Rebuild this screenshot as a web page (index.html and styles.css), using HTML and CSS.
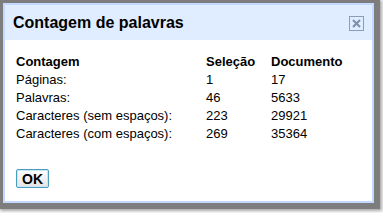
FILE: index.html
```html
<!DOCTYPE html>
<html>
<head>
<meta charset="utf-8">
<link rel="stylesheet" href="styles.css">
</head>
<body>
<div class="frame">
  <div class="dialog">
    <div class="titlebar">
      <span class="title">Contagem de palavras</span>
      <span class="close"><svg width="15" height="15" viewBox="0 0 15 15"><rect x="0.5" y="0.5" width="14" height="14" fill="none" stroke="#8b9bb8"/><path d="M4 4 L11 11 M11 4 L4 11" stroke="#7e8ea8" stroke-width="2"/></svg></span>
    </div>
    <div class="content">
      <table class="counts">
        <tr class="head"><td>Contagem</td><td>Seleção</td><td>Documento</td></tr>
        <tr><td>Páginas:</td><td>1</td><td>17</td></tr>
        <tr><td>Palavras:</td><td>46</td><td>5633</td></tr>
        <tr><td>Caracteres (sem espaços):</td><td>223</td><td>29921</td></tr>
        <tr><td>Caracteres (com espaços):</td><td>269</td><td>35364</td></tr>
      </table>
      <button class="ok">OK</button>
    </div>
  </div>
</div>
</body>
</html>
```
FILE: styles.css
```css
html, body { margin: 0; padding: 0; background: #fff; }
body { width: 383px; height: 213px; overflow: hidden; font-family: "Liberation Sans", Arial, sans-serif; }
.frame {
  width: 380px; height: 209px;
  box-sizing: border-box;
  padding: 3px 0 0 3px;
  background: #7d7d7d;
  box-shadow: 1px 1px 3px 1px rgba(0,0,0,0.35);
}
.dialog {
  width: 371px; height: 200px;
  box-sizing: border-box;
  border: 2px solid #c3d9ff;
  background: #fff;
  display: flex; flex-direction: column;
}
.titlebar {
  background: #e0ecff;
  height: 35px;
  display: flex; align-items: center; justify-content: space-between;
  padding: 0 8px 0 8px;
}
.title { font-weight: bold; font-size: 16px; color: #000; }
.close { display: flex; margin-top: 1px; }
.content { padding: 12px 11px 0 11px; }
.counts { border-collapse: collapse; font-size: 13px; color: #000; }
.counts td { padding: 0; height: 18px; vertical-align: middle; }
.counts .head td { font-weight: bold; }
.counts td:first-child { width: 190px; }
.counts td:nth-child(2) { width: 65px; }
.ok {
  display: block;
  margin-top: 27px;
  width: 33px; height: 19px;
  font-family: "Liberation Sans", Arial, sans-serif;
  font-size: 14px; font-weight: bold;
  padding: 0;
  border: 1px solid #4c9ebf;
  border-radius: 2px;
  background: linear-gradient(#ffffff, #e4e4e4);
  box-shadow: inset 0 0 0 1px #c9e6f2;
  color: #000;
}
```
